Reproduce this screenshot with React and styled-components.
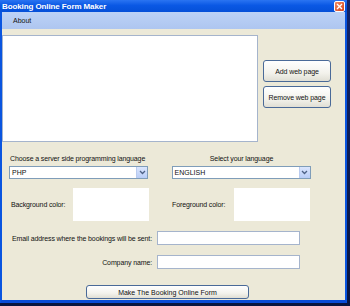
import React from 'react';
import styled, { createGlobalStyle } from 'styled-components';

const GlobalStyle = createGlobalStyle`
  html, body {
    margin: 0;
    padding: 0;
    background: #0c1c52;
  }
  body {
    width: 350px;
    height: 306px;
    overflow: hidden;
    font-family: "Liberation Sans", Arial, sans-serif;
  }
`;

function App() {
  return (
    <Desktop>
      <GlobalStyle />
      <Window>
        <TitleBar>
          <TitleText>Booking Online Form Maker</TitleText>
          <CloseBtn>
            <svg width="7" height="7" viewBox="0 0 7 7">
              <path d="M1 1 L6 6 M6 1 L1 6" stroke="#fff" strokeWidth="1.4" />
            </svg>
          </CloseBtn>
        </TitleBar>
        <MenuBar>
          <MenuItem>About</MenuItem>
        </MenuBar>

        <Content>
          <TopRow>
            <ListBox />
            <ButtonCol>
              <SideButton>Add web page</SideButton>
              <SideButton>Remove web page</SideButton>
            </ButtonCol>
          </TopRow>

          <LangRow>
            <LangCol>
              <Label>Choose a server side programming language</Label>
              <Select value="PHP" />
            </LangCol>
            <LangCol center>
              <Label>Select your language</Label>
              <Select value="ENGLISH" />
            </LangCol>
          </LangRow>

          <ColorRow>
            <ColorCol>
              <Label>Background color:</Label>
              <Swatch />
            </ColorCol>
            <ColorCol>
              <Label>Foreground color:</Label>
              <Swatch />
            </ColorCol>
          </ColorRow>

          <FormGrid>
            <FieldLabel>Email address where the bookings will be sent:</FieldLabel>
            <TextInput />
            <FieldLabel>Company name:</FieldLabel>
            <TextInput />
          </FormGrid>

          <Footer>
            <MakeButton>Make The Booking Online Form</MakeButton>
          </Footer>
        </Content>
      </Window>
    </Desktop>
  );
}

function Select(props) {
  return (
    <SelectBox>
      <SelectValue>{props.value}</SelectValue>
      <Arrow>
        <svg width="7" height="5" viewBox="0 0 7 5">
          <path d="M1 1 L3.5 3.5 L6 1" stroke="#4d6185" strokeWidth="1.3" fill="none" />
        </svg>
      </Arrow>
    </SelectBox>
  );
}

const Desktop = styled.div`
  width: 350px;
  height: 306px;
  background: linear-gradient(180deg, #12246a 0%, #0a1540 100%);
`;

const Window = styled.div`
  width: 347px;
  height: 303px;
  display: flex;
  flex-direction: column;
  box-sizing: border-box;
`;

const TitleBar = styled.div`
  height: 12px;
  display: flex;
  align-items: center;
  justify-content: space-between;
  padding: 0 2px 0 2px;
  background: linear-gradient(180deg, #2a74f2 0%, #0a58e4 45%, #0550d8 100%);
`;

const TitleText = styled.span`
  color: #fff;
  font-weight: bold;
  font-size: 8px;
  letter-spacing: -0.1px;
  white-space: nowrap;
`;

const CloseBtn = styled.div`
  width: 9px;
  height: 9px;
  border: 1px solid #fff;
  border-radius: 2px;
  background: linear-gradient(135deg, #f08a62 0%, #d9441c 100%);
  display: flex;
  align-items: center;
  justify-content: center;
`;

const MenuBar = styled.div`
  height: 17px;
  display: flex;
  align-items: center;
  padding-left: 11px;
  border-left: 2px solid #0a55e0;
  border-right: 2px solid #0a55e0;
  background: linear-gradient(180deg, #bcd2f6 0%, #aec6f0 100%);
`;

const MenuItem = styled.span`
  font-size: 7px;
  color: #111;
`;

const Content = styled.div`
  flex: 1;
  display: flex;
  flex-direction: column;
  background: #ece9d8;
  border-left: 2px solid #0a55e0;
  border-right: 2px solid #0a55e0;
  border-bottom: 3px solid #0a4bd6;
`;

const TopRow = styled.div`
  display: flex;
  margin-top: 6px;
`;

const ListBox = styled.div`
  width: 256px;
  height: 107px;
  box-sizing: border-box;
  background: #fff;
  border: 1px solid #a5b4cc;
`;

const ButtonCol = styled.div`
  display: flex;
  flex-direction: column;
  gap: 4px;
  margin-left: 5px;
  padding-top: 25px;
`;

const SideButton = styled.div`
  width: 68px;
  height: 22px;
  box-sizing: border-box;
  display: flex;
  align-items: center;
  justify-content: center;
  font-size: 7px;
  letter-spacing: -0.1px;
  color: #111;
  white-space: nowrap;
  border: 1px solid #4a6a98;
  border-radius: 3px;
  background: linear-gradient(180deg, #ffffff 0%, #f3f2ec 60%, #e0ded4 100%);
`;

const LangRow = styled.div`
  display: flex;
  gap: 22px;
  margin-top: 12px;
  padding-left: 7px;
`;

const LangCol = styled.div`
  width: 140px;
  display: flex;
  flex-direction: column;
  align-items: ${p => (p.center ? 'center' : 'flex-start')};
  gap: 2px;
`;

const Label = styled.span`
  font-size: 7px;
  letter-spacing: -0.12px;
  color: #111;
  white-space: nowrap;
  line-height: 10px;
  padding-left: 1px;
`;

const SelectBox = styled.div`
  width: 139px;
  height: 13px;
  box-sizing: border-box;
  display: flex;
  align-items: center;
  justify-content: space-between;
  background: #fff;
  border: 1px solid #7f9db9;
  padding-left: 2px;
`;

const SelectValue = styled.span`
  font-size: 7px;
  color: #111;
`;

const Arrow = styled.div`
  width: 10px;
  height: 11px;
  display: flex;
  align-items: center;
  justify-content: center;
  background: linear-gradient(180deg, #dbe6fd 0%, #b9cdf7 100%);
  border-left: 1px solid #b9cbef;
`;

const ColorRow = styled.div`
  display: flex;
  gap: 22px;
  margin-top: 9px;
  padding-left: 8px;
`;

const ColorCol = styled.div`
  width: 139px;
  display: flex;
  align-items: center;
  justify-content: space-between;
`;

const Swatch = styled.div`
  width: 76px;
  height: 33px;
  background: #fff;
`;

const FormGrid = styled.div`
  display: grid;
  grid-template-columns: 150px 143px;
  column-gap: 5px;
  row-gap: 10px;
  margin-top: 10px;
  align-items: center;
`;

const FieldLabel = styled.span`
  font-size: 7px;
  letter-spacing: -0.12px;
  color: #111;
  text-align: right;
  white-space: nowrap;
`;

const TextInput = styled.div`
  height: 14px;
  box-sizing: border-box;
  background: #fff;
  border: 1px solid #a5b4cc;
`;

const Footer = styled.div`
  display: flex;
  padding-left: 84px;
  margin-top: 16px;
`;

const MakeButton = styled.div`
  width: 163px;
  height: 14px;
  box-sizing: border-box;
  display: flex;
  align-items: center;
  justify-content: center;
  font-size: 7px;
  color: #111;
  border: 1px solid #4a6a98;
  border-radius: 3px;
  background: linear-gradient(180deg, #ffffff 0%, #f3f2ec 60%, #e0ded4 100%);
`;

export default App;
